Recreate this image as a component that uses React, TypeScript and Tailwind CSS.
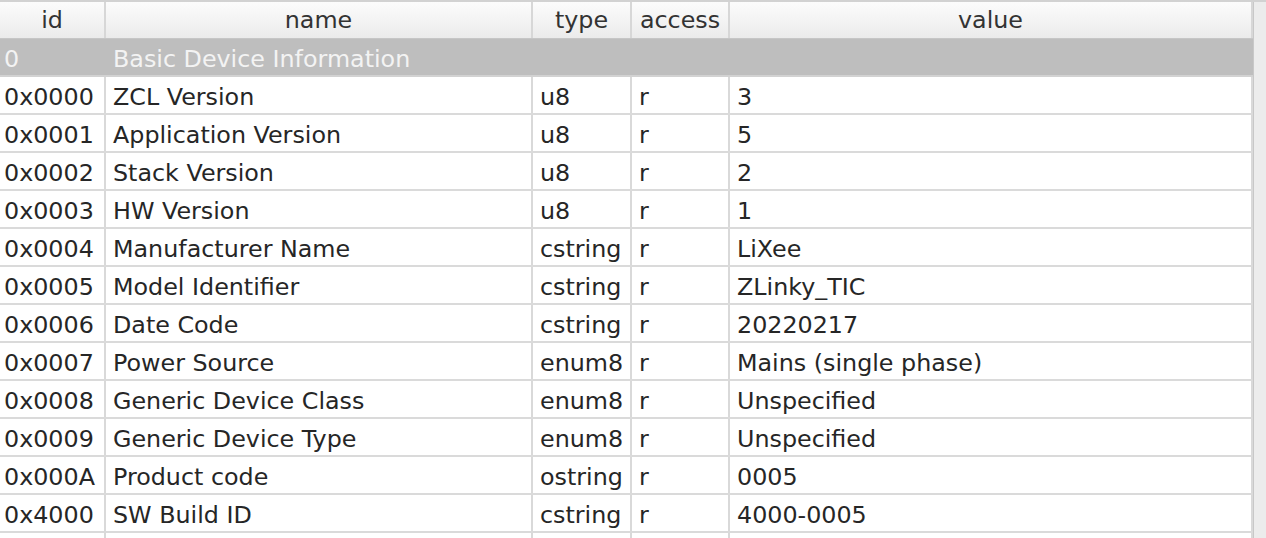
import React from "react";

const rows: [string, string, string, string, string][] = [
  ["0x0000", "ZCL Version", "u8", "r", "3"],
  ["0x0001", "Application Version", "u8", "r", "5"],
  ["0x0002", "Stack Version", "u8", "r", "2"],
  ["0x0003", "HW Version", "u8", "r", "1"],
  ["0x0004", "Manufacturer Name", "cstring", "r", "LiXee"],
  ["0x0005", "Model Identifier", "cstring", "r", "ZLinky_TIC"],
  ["0x0006", "Date Code", "cstring", "r", "20220217"],
  ["0x0007", "Power Source", "enum8", "r", "Mains (single phase)"],
  ["0x0008", "Generic Device Class", "enum8", "r", "Unspecified"],
  ["0x0009", "Generic Device Type", "enum8", "r", "Unspecified"],
  ["0x000A", "Product code", "ostring", "r", "0005"],
  ["0x4000", "SW Build ID", "cstring", "r", "4000-0005"],
  ["", "", "", "", ""],
];

const widths = ["w-[106px]", "w-[427px]", "w-[99px]", "w-[98px]", "w-[523px]"];

export default function App() {
  return (
    <div
      className="w-[1266px] h-[538px] overflow-hidden bg-white text-[#262626]"
      style={{ fontFamily: '"DejaVu Sans", sans-serif' }}
    >
      <div className="h-[2px] bg-[#d2d2d2]" />
      <div className="flex">
        <div className="w-[1253px] flex flex-col">
          {/* header */}
          <div className="flex h-[37px] bg-gradient-to-b from-[#fcfcfc] to-[#ebebeb] border-b border-[#c6c6c6] text-[23.8px] text-[#333333]">
            {["id", "name", "type", "access", "value"].map((h, i) => (
              <div
                key={h}
                className={`${widths[i]} shrink-0 flex items-center justify-center leading-none pt-[2px] border-r-2 border-[#d7d7d7]`}
              >
                {h}
              </div>
            ))}
          </div>
          {/* group row */}
          <div className="flex h-[38px] bg-[#bebebe] text-[23.8px] text-[#f3f3f3] border-b-2 border-[#d2d2d2]">
            <div className={`${widths[0]} shrink-0 flex items-center pl-[4px] pt-[6px] leading-none`}>0</div>
            <div className="flex-1 flex items-center pl-[7px] pt-[6px] leading-none">Basic Device Information</div>
          </div>
          {rows.map((r, ri) => (
            <div key={ri} className="flex h-[38px] border-b-2 border-[#dadada] text-[23.8px]">
              {r.map((c, ci) => (
                <div
                  key={ci}
                  className={`${widths[ci]} shrink-0 flex items-center leading-none pt-[6px] whitespace-nowrap border-r-2 border-[#d9d9d9] ${
                    ci === 0 ? "pl-[4px]" : "pl-[7px]"
                  }`}
                >
                  {c}
                </div>
              ))}
            </div>
          ))}
        </div>
        <div className="flex-1 bg-[#ececec] border-l border-[#c8c8c8]" />
      </div>
    </div>
  );
}
